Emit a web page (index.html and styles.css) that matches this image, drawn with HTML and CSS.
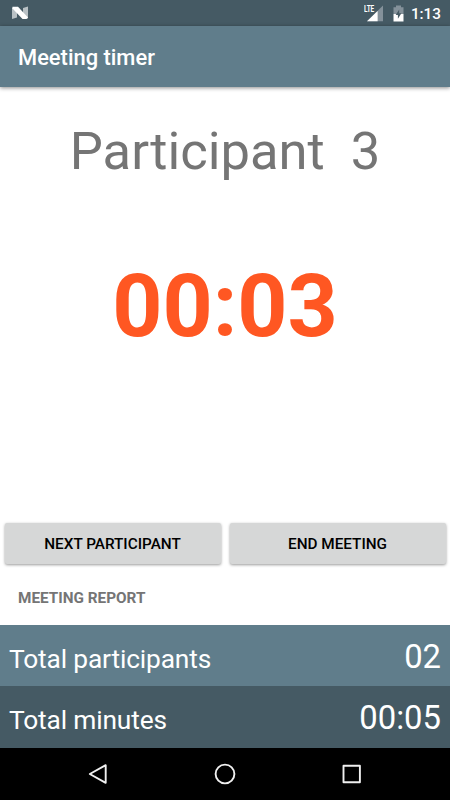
FILE: index.html
```html
<!DOCTYPE html>
<html lang="en">
<head>
    <meta charset="UTF-8">
    <meta name="viewport" content="width=device-width, initial-scale=1.0">
    <title>Meeting timer</title>
    <link rel="stylesheet" href="styles.css">
</head>
<body>
    <div class="status-bar">
        <svg class="logo" width="17" height="14" viewBox="0 0 17 14">
            <path d="M0 1.500L5 3v8.500L0 13z" fill="#b9c1c5"/>
            <path d="M11 2L16 .5v12L11 11z" fill="#b9c1c5"/>
            <path d="M.5.7h5.500L16 11.500 14.500 13h-4L.5 2.500z" fill="#fff"/>
        </svg>
        <div class="status-icons">
            <svg class="signal" width="21" height="17" viewBox="0 0 21 17">
                <path d="M20 .5v15.800H4z" fill="#84919a"/>
                <path d="M14.600 6V16.300H4z" fill="#fff"/>
            </svg>
            <span class="lte">LTE</span>
            <svg class="battery" width="11" height="17" viewBox="0 0 11 17">
                <path d="M3 .5h5v1.700h2.500v6.800H.5V2.200H3z" fill="#84919a"/>
                <path d="M.5 9h10v7.500H.5z" fill="#fff"/>
                <path d="M6.200 4.500L2.700 10h2.200v3.800L8.400 8.300H6.200z" fill="#455a64"/>
            </svg>
            <span class="clock">1:13</span>
        </div>
    </div>
    <header class="app-bar">
        <h1>Meeting timer</h1>
    </header>
    <main>
        <div class="participant">Participant&nbsp; 3</div>
        <div class="timer">00:03</div>
        <div class="buttons">
            <button type="button">NEXT PARTICIPANT</button>
            <button type="button">END MEETING</button>
        </div>
        <h2>MEETING REPORT</h2>
    </main>
    <div class="report">
        <div class="row">
            <span class="label">Total participants</span>
            <span class="value">02</span>
        </div>
        <div class="row dark">
            <span class="label">Total minutes</span>
            <span class="value">00:05</span>
        </div>
    </div>
    <nav class="nav-bar">
        <svg width="22" height="22" viewBox="0 0 22 22">
            <path d="M18.700 2.200v17.600L2.800 11z"/>
        </svg>
        <svg width="22" height="22" viewBox="0 0 22 22">
            <circle cx="11" cy="11" r="9.400"/>
        </svg>
        <svg width="22" height="22" viewBox="0 0 22 22">
            <rect x="2.500" y="2.800" width="16.400" height="16.400"/>
        </svg>
    </nav>
</body>
</html>
```
FILE: styles.css
```css
body {
    margin: 0;
    height: 800px;
    display: flex;
    flex-direction: column;
    overflow: hidden;
    font-family: Roboto, sans-serif;
    background: #fff;
}
.status-bar {
    height: 26px;
    box-sizing: border-box;
    padding: 0 9px 0 12px;
    display: flex;
    align-items: center;
    justify-content: space-between;
    background: #455a64;
    color: #fff;
}
.status-icons {
    display: flex;
    align-items: center;
    position: relative;
}
.signal {
    margin-right: 9px;
}
.lte {
    position: absolute;
    left: 1px;
    top: 1px;
    font-size: 9px;
    line-height: 10px;
    font-weight: bold;
    letter-spacing: -0.2px;
    transform: scaleX(0.72);
    transform-origin: left;
}
.battery {
    margin-right: 7px;
}
.clock {
    font-size: 15.3px;
    font-weight: 500;
    line-height: 18px;
    padding-top: 2px;
}
.app-bar {
    height: 61px;
    display: flex;
    align-items: center;
    padding: 0 18px;
    background: #607d8b;
    box-shadow: 0 1px 4px rgba(0, 0, 0, 0.45);
}
h1 {
    margin: 0;
    padding-top: 2px;
    font-size: 21.9px;
    font-weight: 500;
    color: #fff;
}
main {
    height: 538px;
    display: flex;
    flex-direction: column;
}
.participant {
    margin-top: 33px;
    font-size: 52.5px;
    line-height: 62px;
    text-align: center;
    color: #757575;
}
.timer {
    margin-top: 72px;
    font-size: 87.6px;
    line-height: 104px;
    font-weight: bold;
    text-align: center;
    color: #ff5722;
}
.buttons {
    margin-top: 165px;
    padding: 0 4.5px;
    display: flex;
    gap: 9px;
}
button {
    flex: 1;
    height: 41px;
    padding: 0;
    border: none;
    border-radius: 2px;
    background: #d6d7d7;
    box-shadow: 0 1px 3px rgba(0, 0, 0, 0.4);
    font-family: inherit;
    font-size: 15.3px;
    font-weight: 500;
    color: #000;
}
h2 {
    margin: 25px 0 0 18px;
    font-size: 15.3px;
    line-height: 18px;
    font-weight: bold;
    color: #757575;
}
.row {
    height: 61px;
    box-sizing: border-box;
    padding: 12px 9px 0;
    display: flex;
    align-items: baseline;
    justify-content: space-between;
    background: #607d8b;
    color: #fff;
}
.dark {
    height: 62px;
    background: #455a64;
}
.label {
    font-size: 26.3px;
    letter-spacing: -0.15px;
}
.value {
    font-size: 32.8px;
    line-height: 40px;
}
.nav-bar {
    flex: 1;
    display: flex;
    align-items: center;
    justify-content: center;
    gap: 105px;
    background: #000;
}
.nav-bar svg {
    fill: none;
    stroke: #f0f0f0;
    stroke-width: 1.9;
    stroke-linejoin: round;
}
```
